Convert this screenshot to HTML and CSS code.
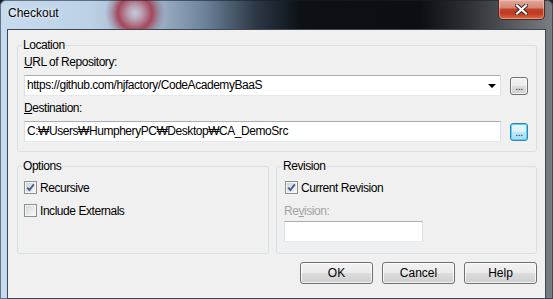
FILE: index.html
```html
<!DOCTYPE html>
<html lang="en">
<head>
    <meta charset="UTF-8">
    <meta name="viewport" content="width=device-width, initial-scale=1.0">
    <title>Checkout</title>
    <link rel="stylesheet" href="styles.css">
</head>
<body>
    <div class="window">
        <div class="titlebar">
            <span class="title">Checkout</span>
            <button class="close-btn" aria-label="Close">
                <svg width="13" height="11" viewBox="0 0 13 11">
                    <path d="M2 1.5 L11 9.5 M11 1.5 L2 9.5" stroke="#3b2520" stroke-width="4" stroke-linecap="square"/>
                    <path d="M2 1.5 L11 9.5 M11 1.5 L2 9.5" stroke="#ffffff" stroke-width="2.2" stroke-linecap="square"/>
                </svg>
            </button>
        </div>

        <div class="client">
            <fieldset class="group location">
                <legend>Location</legend>
                <div class="field-label"><u>U</u>RL of Repository:</div>
                <div class="field-row">
                    <div class="textbox combo">
                        <span>https://github.com/hjfactory/CodeAcademyBaaS</span>
                        <span class="combo-arrow"></span>
                    </div>
                    <button class="browse-btn">...</button>
                </div>
                <div class="field-label"><u>D</u>estination:</div>
                <div class="field-row">
                    <div class="textbox">C:₩Users₩HumpheryPC₩Desktop₩CA_DemoSrc</div>
                    <button class="browse-btn focused">...</button>
                </div>
            </fieldset>

            <div class="group-row">
                <fieldset class="group options">
                    <legend>Options</legend>
                    <div class="check-row">
                        <span class="checkbox checked"></span>
                        <span>Recursive</span>
                    </div>
                    <div class="check-row">
                        <span class="checkbox"></span>
                        <span>Include Externals</span>
                    </div>
                </fieldset>

                <fieldset class="group revision">
                    <legend>Revision</legend>
                    <div class="check-row">
                        <span class="checkbox checked"></span>
                        <span>Current Revision</span>
                    </div>
                    <div class="field-label disabled">Re<u>v</u>ision:</div>
                    <div class="textbox small"></div>
                </fieldset>
            </div>

            <div class="buttons">
                <button class="push-btn">OK</button>
                <button class="push-btn">Cancel</button>
                <button class="push-btn">Help</button>
            </div>
        </div>
    </div>
</body>
</html>
```

FILE: styles.css
```css
/* Windows 7 style dialog */
:root {
    --face: #f0f0f0;
    --text: #000000;
    --group-border: #d5dfe5;
    --ui-font: "Segoe UI", "Liberation Sans", Arial, sans-serif;
}

* {
    box-sizing: border-box;
}

body {
    margin: 0;
    background: #1a1d22;
    font-family: var(--ui-font);
    font-size: 12px;
    color: var(--text);
}

.window {
    width: 553px;
    height: 299px;
    display: flex;
    flex-direction: column;
    border-radius: 6px 6px 0 0;
    overflow: hidden;
    box-shadow: inset 0 0 0 1px rgba(20, 30, 40, 0.55);
    background:
        radial-gradient(circle at 135px 13px, #c6c9dd 0, #b9a0b2 7px, #a4475a 17px, rgba(150, 80, 95, 0.35) 24px, rgba(150, 80, 95, 0) 30px),
        linear-gradient(to right, #c6dbef 0, #bcd1e6 90px, #96abc2 165px, #6c8299 205px, #2d3946 255px, #0d1116 300px, #0b0e13 420px, #2e3236 470px, #5d6166 520px, #7b7f84 553px);
}

/* Title bar */
.titlebar {
    height: 29px;
    flex: none;
    display: flex;
    align-items: flex-start;
    padding: 0 8px 0 8px;
}

.title {
    margin-top: 6px;
    line-height: 15px;
    text-shadow: 0 0 6px rgba(255, 255, 255, 0.9), 0 0 2px rgba(255, 255, 255, 0.7);
}

.close-btn {
    margin-left: auto;
    width: 47px;
    height: 20px;
    padding: 0;
    border: 1px solid #4a2a25;
    border-top: none;
    border-radius: 0 0 5px 5px;
    background: linear-gradient(to bottom, #e2a89c 0, #d48876 40%, #c3412a 50%, #c0391f 70%, #dc6a43 100%);
    box-shadow: inset 0 0 0 1px rgba(255, 210, 200, 0.45);
    display: flex;
    align-items: center;
    justify-content: center;
}

/* Client area */
.client {
    flex: 1;
    margin: 0 7px;
    background: var(--face);
    border: 1px solid #3e4852;
    padding: 8px 8px 0 9px;
    display: flex;
    flex-direction: column;
    letter-spacing: -0.45px;
}

.group {
    margin: 0;
    min-width: 0;
    border: 1px solid var(--group-border);
    border-radius: 3px;
    padding: 2px 8px 9px 6px;
}

.group legend {
    padding: 0 1px;
    margin-left: -2px;
    line-height: 15px;
}

.field-label {
    line-height: 15px;
    height: 15px;
}

.field-label.disabled {
    color: #a3a3a3;
}

.field-row {
    display: flex;
    align-items: center;
    gap: 9px;
    margin: 5px 0 5px 0;
}

.field-row:first-of-type {
    margin-top: 4px;
}

.field-row:last-child {
    margin-bottom: 0;
}

.textbox {
    height: 21px;
    flex: 1;
    background: #ffffff;
    border: 1px solid #dbdfe6;
    border-top-color: #abadb3;
    border-bottom-color: #e3e9ef;
    padding: 0 2px;
    line-height: 19px;
    white-space: nowrap;
}

.combo {
    display: flex;
    align-items: center;
    justify-content: space-between;
    padding-right: 4px;
}

.combo-arrow {
    width: 0;
    height: 0;
    border-left: 4px solid transparent;
    border-right: 4px solid transparent;
    border-top: 4px solid #000000;
    margin-top: 1px;
}

.browse-btn {
    width: 18px;
    height: 18px;
    flex: none;
    padding: 0;
    border: 1px solid #707070;
    border-radius: 3px;
    background: linear-gradient(to bottom, #f2f2f2 0, #ebebeb 50%, #dddddd 50%, #cfcfcf 100%);
    box-shadow: inset 0 0 0 1px rgba(255, 255, 255, 0.7);
    font-family: var(--ui-font);
    font-size: 11px;
    line-height: 12px;
    color: #333333;
    letter-spacing: -0.5px;
}

.browse-btn.focused {
    border-color: #3c7fb1;
    background: linear-gradient(to bottom, #eaf6fd 0, #d9f0fc 50%, #bee6fd 50%, #a7d9f5 100%);
    box-shadow: inset 0 0 0 1px #48d8fb;
}

/* Options / Revision */
.group-row {
    display: flex;
    gap: 7px;
    margin-top: 7px;
}

.options {
    width: 252px;
    padding-top: 5px;
}

.revision {
    flex: 1;
    padding: 5px 10px 11px 7px;
}

.check-row {
    display: flex;
    align-items: center;
    gap: 3px;
    height: 17px;
    margin-bottom: 6px;
}

.revision .check-row {
    margin-left: 1px;
    margin-bottom: 8px;
}

.checkbox {
    width: 13px;
    height: 13px;
    flex: none;
    border: 1px solid #8e8f8f;
    background: linear-gradient(135deg, #cfd2d6 0, #e9eaeb 55%, #fbfbfb 100%);
    box-shadow: inset 0 0 0 1px #f4f4f4;
}

.checkbox.checked {
    background:
        url("data:image/svg+xml,%3Csvg xmlns='http://www.w3.org/2000/svg' width='11' height='11'%3E%3Cpath d='M2.2 5.6 L4.4 8 L8.8 2.4' fill='none' stroke='%23475d8c' stroke-width='1.9'/%3E%3C/svg%3E") center / 11px 11px no-repeat,
        linear-gradient(135deg, #cdd1d8 0, #e4e7ec 55%, #f7f8fa 100%);
}

.textbox.small {
    flex: none;
    width: 139px;
    margin-top: 2px;
}

/* Dialog buttons */
.buttons {
    display: flex;
    justify-content: flex-end;
    gap: 9px;
    margin-top: 8px;
}

.push-btn {
    width: 73px;
    height: 22px;
    padding: 0;
    border: 1px solid #707070;
    border-radius: 3px;
    background: linear-gradient(to bottom, #f2f2f2 0, #ebebeb 50%, #dddddd 50%, #cfcfcf 100%);
    box-shadow: inset 0 0 0 1px rgba(255, 255, 255, 0.75);
    font-family: var(--ui-font);
    font-size: 12px;
    color: #000000;
}
```
